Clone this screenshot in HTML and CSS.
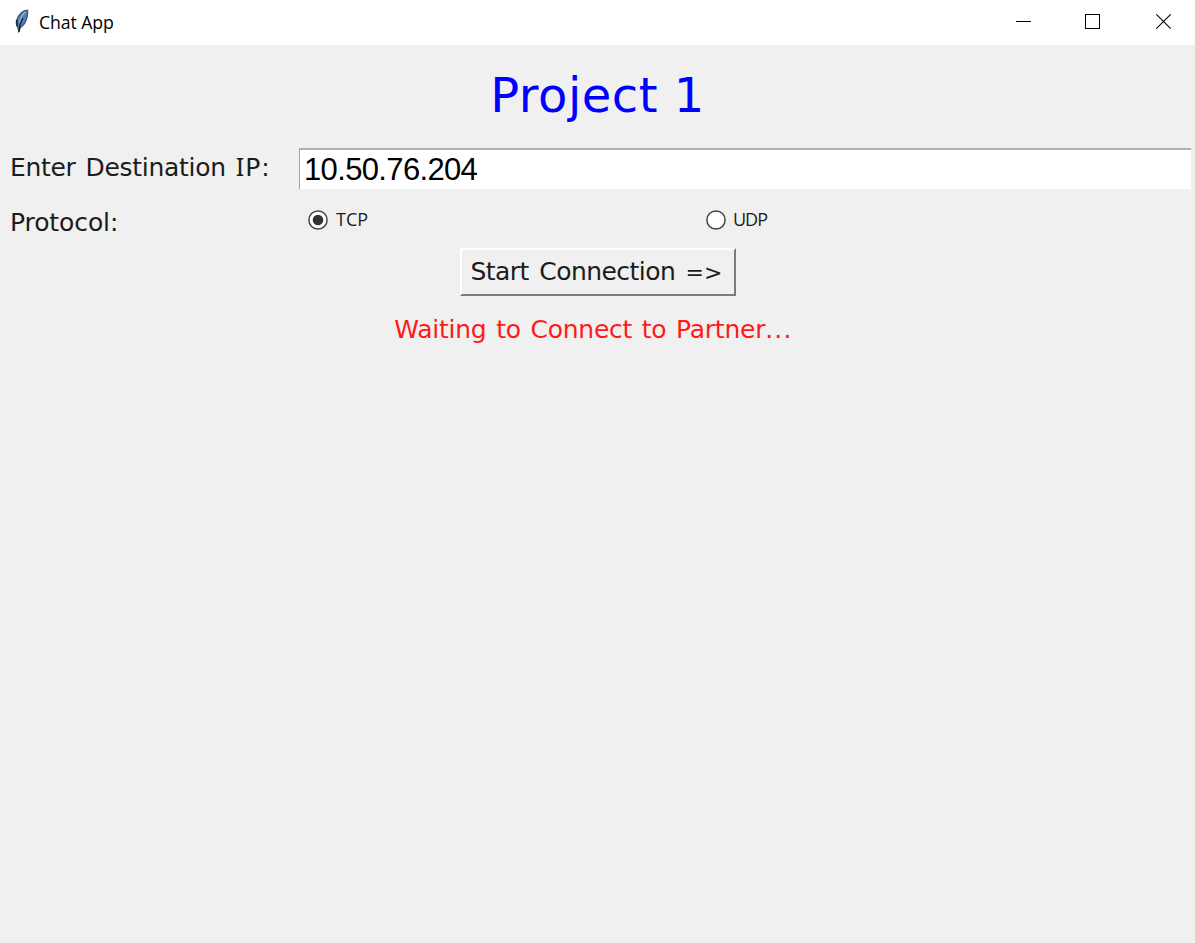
FILE: index.html
```html
<!DOCTYPE html>
<html lang="en">
<head>
<meta charset="utf-8">
<title>Chat App</title>
<link rel="stylesheet" href="styles.css">
</head>
<body>
<header class="titlebar">
  <svg class="feather" width="16" height="26" viewBox="0 0 16 26">
    <path d="M13.500 2C9 2 4.500 6.500 2.500 12.500C1.700 16 2.500 18 4 20L4.800 23.500L6.500 19.500C10 17 12 14 13 9.500C13.600 6.500 14.200 3.500 13.500 2Z" fill="#4a7fbd" stroke="#4c5661" stroke-width="1.200"/>
    <path d="M11.500 4C8 6.500 6.500 10 5.500 15" fill="none" stroke="#8fb4dc" stroke-width="1.500"/>
    <path d="M9 10C7 13 5.500 18 4.800 24M2.800 12L3.300 18" fill="none" stroke="#14181f" stroke-width="1.300"/>
  </svg>
  <span class="caption">Chat App</span>
  <div class="controls">
    <svg width="16" height="16" viewBox="0 0 16 16" shape-rendering="crispEdges"><path d="M0 7.500H15" stroke="#000"/></svg>
    <svg width="16" height="16" viewBox="0 0 16 16" shape-rendering="crispEdges"><path d="M.5.5H14.500V14.500H.5Z" fill="none" stroke="#000"/></svg>
    <svg width="16" height="16" viewBox="0 0 16 16"><path d="M.3.300L14.700 14.700M14.700.300L.3 14.700" stroke="#000" stroke-width="1.100"/></svg>
  </div>
</header>
<main class="content">
  <h1 class="title"><span>Project 1</span></h1>
  <div class="row row-ip">
    <label class="label label-ip" for="ip">Enter Destination <span class="abbr"><span class="serif-i">I</span>P:</span></label>
    <input class="entry" id="ip" type="text" value="10.50.76.204" spellcheck="false">
  </div>
  <div class="row row-protocol">
    <span class="label label-protocol">Protocol:</span>
    <div class="options">
      <label class="option"><svg width="20" height="20" viewBox="0 0 20 20"><circle cx="10" cy="10" r="9.100" fill="#fff" stroke="#444" stroke-width="1.500"/><circle cx="10" cy="10" r="5.300" fill="#333"/></svg><span>TCP</span></label>
      <label class="option option-udp"><svg width="20" height="20" viewBox="0 0 20 20"><circle cx="10" cy="10" r="9.100" fill="#fff" stroke="#444" stroke-width="1.500"/></svg><span>UDP</span></label>
    </div>
  </div>
  <button class="start" type="button">Start Connection <span class="arrow">=&gt;</span></button>
  <p class="status">Waiting to Connect to Partner<span class="dots">...</span></p>
</main>
</body>
</html>
```
FILE: styles.css
```css
* { box-sizing: border-box; }
body {
  margin: 0;
  height: 943px;
  overflow: hidden;
  background: #f0f0f0;
  color: #1c1c1c;
  font-family: "DejaVu Sans", Verdana, sans-serif;
}
.titlebar {
  display: flex;
  align-items: center;
  height: 45px;
  padding: 0 23px 2px 14px;
  background: #fff;
}
.feather { margin-top: -2px; }
.caption {
  margin-left: 9px;
  font: 17.7px/24px "Open Sans", sans-serif;
  letter-spacing: -0.1px;
  color: #000;
}
.controls {
  display: grid;
  grid-template-columns: 69px 71px 16px;
  margin-left: auto;
}
.content {
  display: flex;
  flex-direction: column;
  align-items: center;
}
.title {
  margin: 20px 0 0;
  height: 60px;
  font-size: 48px;
  font-weight: 400;
  line-height: 60px;
  letter-spacing: 0.5px;
  color: #00f;
}
.row {
  display: grid;
  grid-template-columns: 289px 1fr;
  width: 100%;
  padding: 0 4px 0 10px;
}
.row-ip { margin-top: 23px; }
.row-protocol { margin-top: 13px; height: 46px; }
.label {
  font-size: 25px;
  line-height: 38px;
  white-space: pre;
}
.label-ip {
  line-height: 36px;
  letter-spacing: -0.3px;
  word-spacing: 2.3px;
}
.label-protocol { line-height: 41px; letter-spacing: -0.1px; }
.abbr { letter-spacing: 1px; }
.serif-i { font-family: "Noto Sans", sans-serif; }
.entry {
  width: 100%;
  height: 41px;
  padding: 0 0 0 4px;
  border: 0 solid #f0f0f0;
  border-top: 2px solid #b0b0b0;
  border-left: 1px solid #a5a5a5;
  border-radius: 0;
  outline: 0;
  background: #fff;
  color: #000;
  font: 31px/39px "Liberation Sans", Arial, sans-serif;
  letter-spacing: -0.65px;
}
.options {
  display: grid;
  grid-template-columns: 397.5px 1fr;
  padding-left: 9px;
}
.option {
  display: flex;
  align-items: center;
  gap: 8px;
  height: 36px;
  font: 18px/24px "Open Sans", sans-serif;
}
.option span { margin-top: -2px; }
.option-udp { gap: 7.5px; letter-spacing: -1px; }
.start {
  width: 276px;
  height: 48px;
  margin: 0;
  padding: 0 2px 0 0;
  border: 2px solid;
  border-color: #fff #7c7c7c #7c7c7c #fff;
  border-radius: 0;
  background: #f0f0f0;
  color: #1c1c1c;
  font: 25px/44px "DejaVu Sans", Verdana, sans-serif;
  letter-spacing: -0.55px;
  word-spacing: 3px;
  white-space: nowrap;
}
.arrow {
  font-size: 22px;
  letter-spacing: 0;
}
.status {
  margin: 18px 8px 0 0;
  font-size: 25px;
  line-height: 32px;
  letter-spacing: -0.25px;
  word-spacing: 2px;
  color: #ff1a1a;
}
.dots { letter-spacing: 1.2px; }
```
